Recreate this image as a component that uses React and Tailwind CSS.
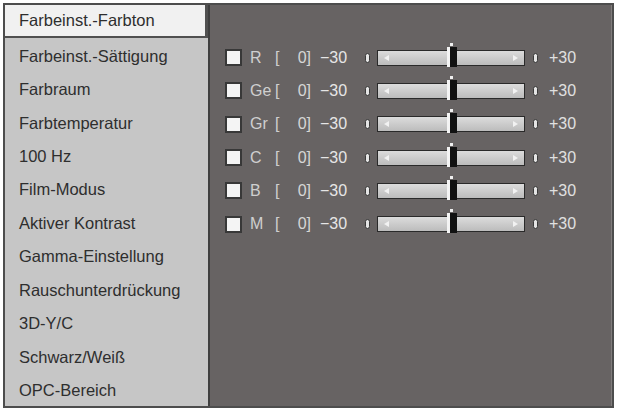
import React from "react";

const menu = [
  "Farbeinst.-Farbton",
  "Farbeinst.-Sättigung",
  "Farbraum",
  "Farbtemperatur",
  "100 Hz",
  "Film-Modus",
  "Aktiver Kontrast",
  "Gamma-Einstellung",
  "Rauschunterdrückung",
  "3D-Y/C",
  "Schwarz/Weiß",
  "OPC-Bereich",
];

const colours = ["R", "Ge", "Gr", "C", "B", "M"];

const Slider = () => {
  return (
    <div className="relative w-[148px] h-[16px] border-[1.5px] border-[#2a2a2a] bg-gradient-to-b from-[#dcdcdc] to-[#bcbcbc]">
      <svg className="absolute left-[5px] top-[3px]" width="7" height="8" viewBox="0 0 7 8">
        <path d="M1 4 L6 1 L6 7 Z" fill="#f2f2f2" />
      </svg>
      <svg className="absolute right-[5px] top-[3px]" width="7" height="8" viewBox="0 0 7 8">
        <path d="M6 4 L1 1 L1 7 Z" fill="#f2f2f2" />
      </svg>
      <div className="absolute left-[69px] top-[-4px] h-[20px] w-[10px] flex">
        <div className="w-[3px] bg-[#f4f4f4]" />
        <div className="flex-1 bg-[#111]" />
      </div>
      <div className="absolute left-[72px] top-[-8px] w-[3px] h-[3px] bg-[#f0f0f0]" />
    </div>
  );
};

const Pill = () => (
  <div className="w-[5px] h-[10px] rounded-full bg-[#e4e4e4] border border-[#3a3a3a]" />
);

const App = () => {
  return (
    <div className="w-[617px] h-[410px] bg-white pt-[3px] pl-[3px] font-['Liberation_Sans',Arial,sans-serif]">
      <div className="flex w-[611px] h-[405px] border-2 border-[#4d4d4d]">
        <div className="w-[203px] flex flex-col bg-[#c6c6c6] text-[#2e2e2e] text-[16.5px]">
          {menu.map((item, i) => (
            <div
              key={item}
              className={
                i === 0
                  ? "flex-1 flex items-center pl-[14px] bg-[#f1f1f1] border-r-[3px] border-b-2 border-[#505050]"
                  : "flex-1 flex items-center pl-[14px] pt-[2px]"
              }
            >
              {item}
            </div>
          ))}
        </div>
        <div className="flex-1 bg-[#676363] border-l-2 border-[#3f3f3f] border-r border-r-[#807c7c] pt-[36px] text-[16px]">
          {colours.map((c) => (
            <div key={c} className="flex items-center h-[33.3px]">
              <div className="ml-[15px] w-[17px] h-[17px] bg-[#f4f4f4] border-2 border-[#383838]" />
              <span className="ml-[8px] w-[25px] text-[#cfcfcf]">{c}</span>
              <span className="w-[20px] text-[#cfcfcf]">[</span>
              <span className="w-[16px] text-right text-[#d6d6d6]">0]</span>
              <span className="ml-[9px] w-[36px] text-[#e6e6e6]">−30</span>
              <div className="ml-[9px]">
                <Pill />
              </div>
              <div className="ml-[7px]">
                <Slider />
              </div>
              <div className="ml-[8px]">
                <Pill />
              </div>
              <span className="ml-[11px] text-[#e0e0e0]">+30</span>
            </div>
          ))}
        </div>
      </div>
    </div>
  );
};

export default App;
